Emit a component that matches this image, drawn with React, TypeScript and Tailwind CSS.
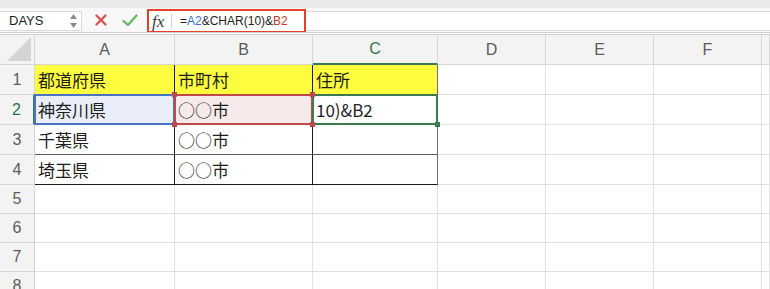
import React from 'react';

const colLetters = ['A', 'B', 'C', 'D', 'E', 'F', 'G'];

const tableRows = [
  ['都道府県', '市町村', '住所'],
  ['神奈川県', '○○市', '10)&B2'],
  ['千葉県', '○○市', ''],
  ['埼玉県', '○○市', ''],
];

const cellFont = "font-['Noto_Sans_CJK_JP','Noto_Sans',sans-serif]";
const headFont = "font-['Liberation_Sans','Noto_Sans',sans-serif]";

function borderFor(row: number, col: number) {
  // row is 1-based, col is 0-based
  if (row <= 4 && col <= 2) {
    const right = col === 2 ? 'border-r-[#6f6f6f]' : 'border-r-[#1c1c1c]';
    const bottom = row === 3 ? 'border-b-[#5c5c5c]' : 'border-b-[#1c1c1c]';
    return `border-r border-b ${right} ${bottom}`;
  }
  return 'border-r border-b border-r-[#e2e2e2] border-b-[#e2e2e2]';
}

function Corner() {
  return (
    <div className="relative bg-[#f3f3f3] border-r border-b border-[#d6d6d6]">
      <svg className="absolute right-[3px] bottom-[3px]" width="24" height="24" viewBox="0 0 24 24">
        <polygon points="24,0 24,24 0,24" fill="#d4d4d4" />
      </svg>
    </div>
  );
}

function Selection({ color, corners, handle }: { color: string; corners?: boolean; handle?: boolean }) {
  return (
    <>
      <div className={`absolute -top-[1px] -left-[1px] -right-[1px] -bottom-[1px] border-2 ${color} z-10`} />
      {corners && (
        <>
          <div className="absolute -top-[3px] -left-[3px] w-[5px] h-[5px] bg-[#c0474a] z-20" />
          <div className="absolute -top-[3px] -right-[3px] w-[5px] h-[5px] bg-[#c0474a] z-20" />
          <div className="absolute -bottom-[3px] -left-[3px] w-[5px] h-[5px] bg-[#c0474a] z-20" />
          <div className="absolute -bottom-[3px] -right-[3px] w-[5px] h-[5px] bg-[#c0474a] z-20" />
        </>
      )}
      {handle && <div className="absolute -bottom-[3px] -right-[3px] w-[5px] h-[5px] bg-[#3b7a4f] z-20" />}
    </>
  );
}

function Toolbar() {
  return (
    <div className="h-[35px] flex flex-col bg-[#f8f8f8]">
      <div className="h-[8px] bg-[#e9e9e9]" />
      <div className="h-[24px] flex items-start">
        {/* name box */}
        <div className="mt-[3px] h-[20px] w-[82px] bg-white border-y border-r border-[#d9d9d9] flex items-center justify-between pl-[9px] pr-[3px]">
          <span className={`text-[13px] text-[#1f1f1f] ${headFont}`}>DAYS</span>
          <svg width="9" height="16" viewBox="0 0 9 16">
            <polygon points="4.5,1 8,6 1,6" fill="#8a8a8a" />
            <polygon points="1,10 8,10 4.5,15" fill="#8a8a8a" />
          </svg>
        </div>
        {/* cancel / enter */}
        <div className="w-[65px] h-[24px] flex items-center">
          <svg className="ml-[13px]" width="12" height="12" viewBox="0 0 12 12">
            <path d="M1.5 1.5 L10.5 10.5 M10.5 1.5 L1.5 10.5" stroke="#e04a47" strokeWidth="2.2" strokeLinecap="round" />
          </svg>
          <svg className="ml-[15px]" width="16" height="13" viewBox="0 0 16 13">
            <path d="M1.5 7 L6 11 L14.5 1.5" stroke="#5cb85c" strokeWidth="2.2" fill="none" strokeLinecap="round" strokeLinejoin="round" />
          </svg>
        </div>
        {/* highlighted formula */}
        <div className="mt-[1px] h-[24px] w-[159px] border-2 border-[#e5402b] bg-white flex items-center">
          <span className="pl-[3px] w-[22px] text-[17px] italic text-[#3c3c3c] font-['Liberation_Serif',serif] leading-none">fx</span>
          <div className="w-px h-[14px] bg-[#d0d0d0]" />
          <span className={`pl-[8px] text-[12px] text-[#1f1f1f] ${headFont}`}>
            =<span className="text-[#3b6fd1]">A2</span>&amp;CHAR(10)&amp;<span className="text-[#c8372d]">B2</span>
          </span>
        </div>
        <div className="mt-[3px] h-[20px] flex-1 bg-white border-y border-[#dcdcdc]" />
      </div>
      <div className="h-[3px] bg-white border-y border-[#d0d0d0]" />
    </div>
  );
}

function Sheet() {
  const rowHeights = ['h-[30px]', 'h-[30px]', 'h-[30px]', 'h-[30px]', 'h-[29px]', 'h-[29px]', 'h-[29px]', 'h-[29px]'];
  return (
    <div className="grid grid-cols-[35px_140px_138px_125px_108px_108px_108px_1fr]">
      <Corner />
      {colLetters.map((l, i) => (
        <div
          key={l}
          className={`h-[30px] bg-[#f3f3f3] flex items-center justify-center text-[16px] ${headFont} ${
            i === 2
              ? 'text-[#2f7446] border-r border-[#d6d6d6] border-b-2 border-b-[#3b7a4f]'
              : 'text-[#5b5b5b] border-r border-b border-[#d6d6d6]'
          }`}
        >
          {i < 6 ? l : ''}
        </div>
      ))}

      {rowHeights.map((h, ri) => {
        const row = ri + 1;
        const data = tableRows[ri];
        return (
          <React.Fragment key={row}>
            <div
              className={`${h} bg-[#f3f3f3] flex items-center justify-center text-[16px] ${headFont} ${
                row === 2
                  ? 'text-[#2f7446] border-b border-[#d6d6d6] border-r-2 border-r-[#3b7a4f]'
                  : 'text-[#5b5b5b] border-r border-b border-[#d6d6d6]'
              }`}
            >
              {row}
            </div>
            {colLetters.map((l, ci) => {
              const text = data && ci <= 2 ? data[ci] : '';
              let bg = 'bg-white';
              if (row === 1 && ci <= 2) bg = 'bg-[#fdfc3e]';
              if (row === 2 && ci === 0) bg = 'bg-[#e9eef8]';
              if (row === 2 && ci === 1) bg = 'bg-[#f6eaea]';
              return (
                <div
                  key={l}
                  className={`relative ${h} ${bg} ${borderFor(row, ci)} flex items-center pl-[3px] text-[17px] text-[#1e1e1e] ${cellFont} whitespace-nowrap overflow-visible`}
                >
                  {text}
                  {row === 2 && ci === 0 && <Selection color="border-[#4a73c6]" />}
                  {row === 2 && ci === 1 && <Selection color="border-[#c0474a]" corners />}
                  {row === 2 && ci === 2 && <Selection color="border-[#3b7a4f]" handle />}
                </div>
              );
            })}
          </React.Fragment>
        );
      })}
    </div>
  );
}

export default function App() {
  return (
    <div className="w-[770px] h-[289px] overflow-hidden bg-white">
      <Toolbar />
      <Sheet />
    </div>
  );
}
